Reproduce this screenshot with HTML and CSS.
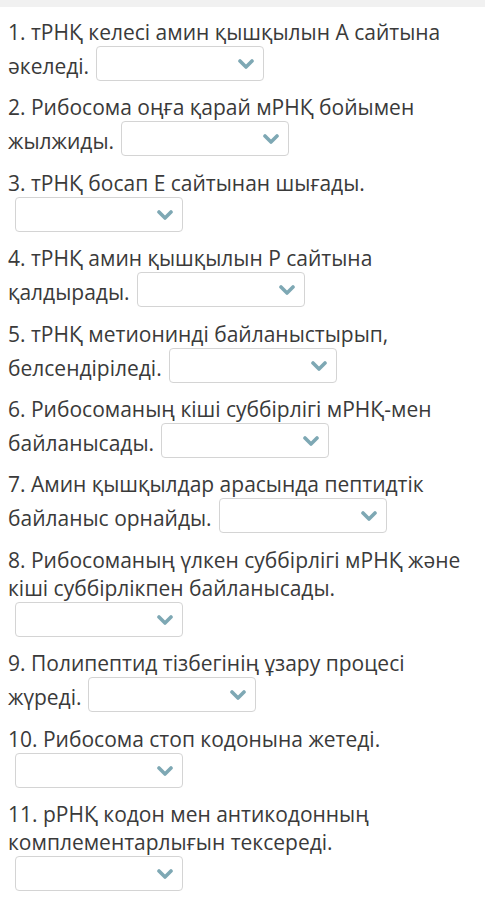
FILE: index.html
```html
<!DOCTYPE html>
<html lang="kk">
<head>
<meta charset="utf-8">
<title>Трансляция кезеңдері</title>
<link rel="stylesheet" href="styles.css">
</head>
<body>
<div class="topbar"></div>
<div class="quiz">
  <p class="item">1. тРНҚ келесі амин қышқылын А сайтына әкеледі.<span class="pick"><svg class="chev" viewBox="0 0 16 10"><path d="M2 2 L8 8 L14 2"/></svg></span></p>
  <p class="item">2. Рибосома оңға қарай мРНҚ бойымен жылжиды.<span class="pick"><svg class="chev" viewBox="0 0 16 10"><path d="M2 2 L8 8 L14 2"/></svg></span></p>
  <p class="item">3. тРНҚ босап Е сайтынан шығады.<span class="pick"><svg class="chev" viewBox="0 0 16 10"><path d="M2 2 L8 8 L14 2"/></svg></span></p>
  <p class="item">4. тРНҚ амин қышқылын Р сайтына қалдырады.<span class="pick"><svg class="chev" viewBox="0 0 16 10"><path d="M2 2 L8 8 L14 2"/></svg></span></p>
  <p class="item">5. тРНҚ метионинді байланыстырып, белсендіріледі.<span class="pick"><svg class="chev" viewBox="0 0 16 10"><path d="M2 2 L8 8 L14 2"/></svg></span></p>
  <p class="item">6. Рибосоманың кіші суббірлігі мРНҚ-мен байланысады.<span class="pick"><svg class="chev" viewBox="0 0 16 10"><path d="M2 2 L8 8 L14 2"/></svg></span></p>
  <p class="item">7. Амин қышқылдар арасында пептидтік байланыс орнайды.<span class="pick"><svg class="chev" viewBox="0 0 16 10"><path d="M2 2 L8 8 L14 2"/></svg></span></p>
  <p class="item">8. Рибосоманың үлкен суббірлігі мРНҚ және кіші суббірлікпен байланысады.<span class="pick"><svg class="chev" viewBox="0 0 16 10"><path d="M2 2 L8 8 L14 2"/></svg></span></p>
  <p class="item">9. Полипептид тізбегінің ұзару процесі жүреді.<span class="pick"><svg class="chev" viewBox="0 0 16 10"><path d="M2 2 L8 8 L14 2"/></svg></span></p>
  <p class="item">10. Рибосома стоп кодонына жетеді.<span class="pick"><svg class="chev" viewBox="0 0 16 10"><path d="M2 2 L8 8 L14 2"/></svg></span></p>
  <p class="item">11. рРНҚ кодон мен антикодонның комплементарлығын тексереді.<span class="pick"><svg class="chev" viewBox="0 0 16 10"><path d="M2 2 L8 8 L14 2"/></svg></span></p>
</div>
</body>
</html>
```

FILE: styles.css
```css
html, body {
  margin: 0;
  padding: 0;
  background: #ffffff;
}

body {
  font-family: "Open Sans", "Noto Sans", sans-serif;
  color: #3a3a3a;
}

/* thin grey strip left over from the block above */
.topbar {
  width: 485px;
  height: 7px;
  background: #f1f1f1;
}

.quiz {
  width: 468px;
  padding: 11px 0 0 8px;
}

.item {
  margin: 0 0 12.4px 0;
  font-size: 21px;
  line-height: 28px;
}

/* empty answer dropdown; overflow keeps its baseline at the bottom edge */
.pick {
  display: inline-block;
  overflow: hidden;
  box-sizing: border-box;
  width: 168px;
  height: 35px;
  margin-left: 7px;
  padding-right: 9px;
  vertical-align: -7px;
  background: #ffffff;
  border: 1px solid #d4d4d4;
  border-radius: 4px;
}

.chev {
  display: block;
  float: right;
  width: 16px;
  height: 10px;
  margin-top: 12px;
}

.chev path {
  fill: none;
  stroke: #7ea8b4;
  stroke-width: 3.6;
  stroke-linecap: round;
  stroke-linejoin: round;
}
```
